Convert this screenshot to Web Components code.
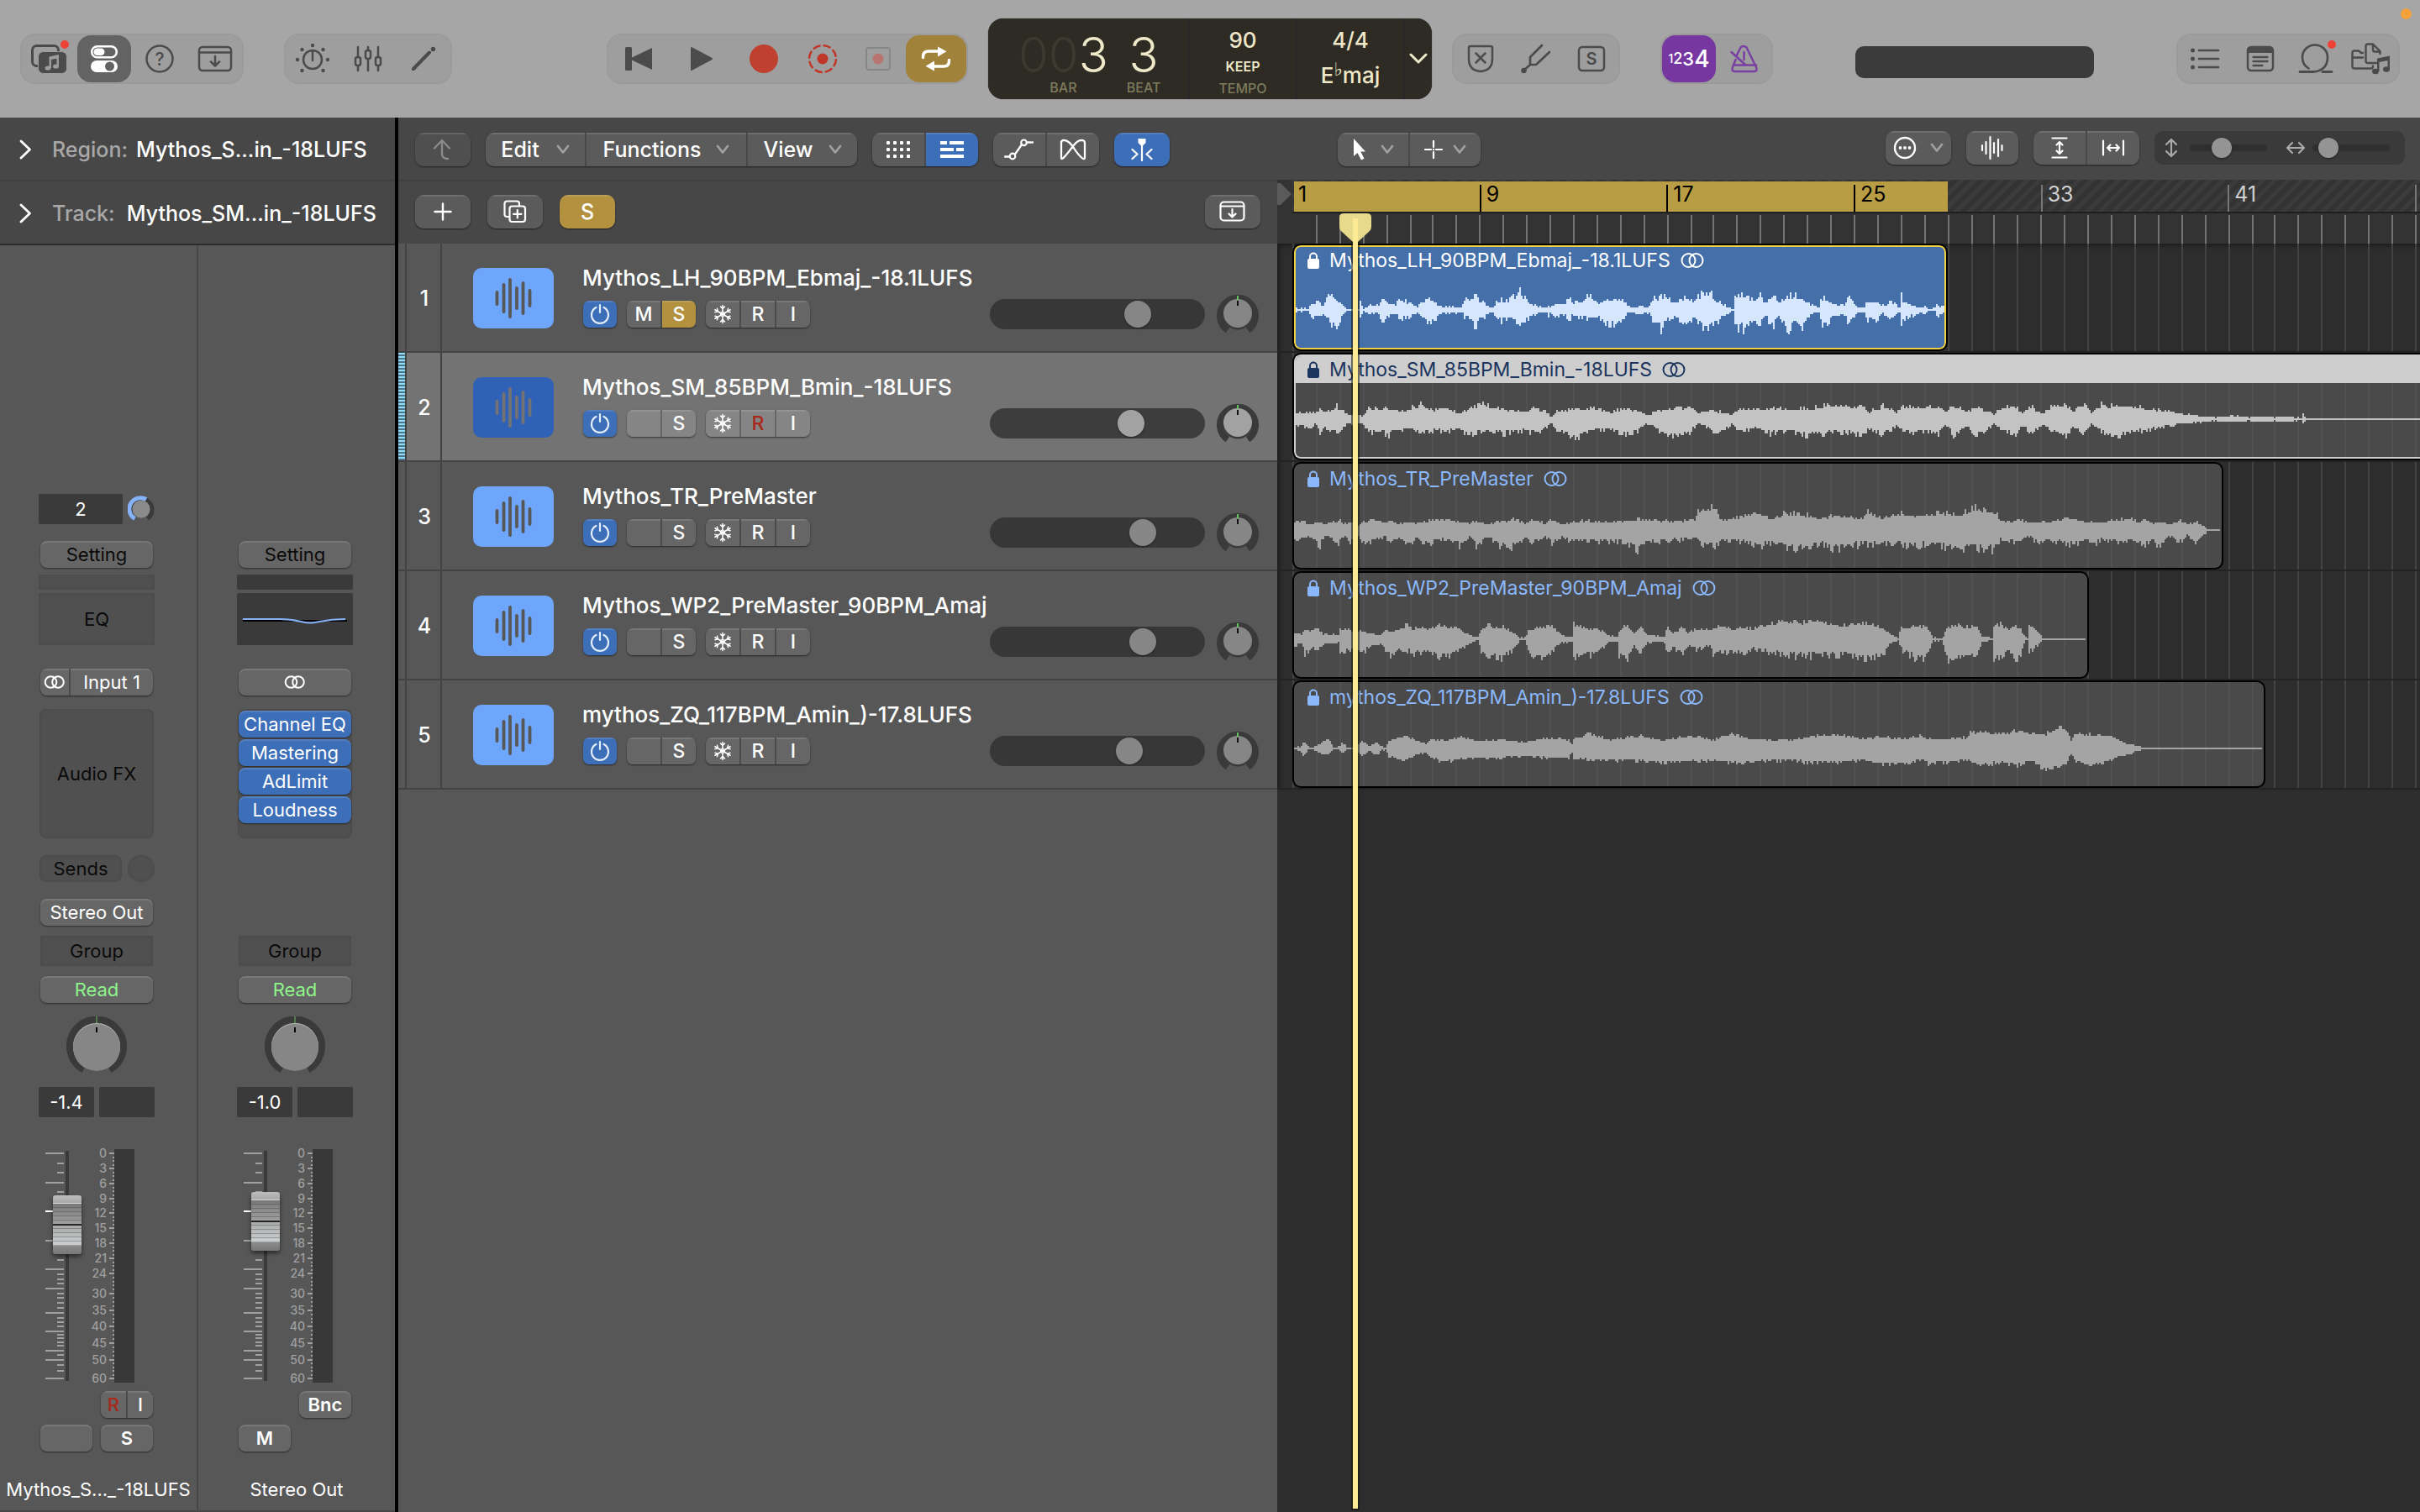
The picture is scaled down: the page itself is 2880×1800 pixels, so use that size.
<!DOCTYPE html>
<html lang="en">
<head>
<meta charset="utf-8">
<title>Mythos – Tracks</title>
<style>
html,body{margin:0;height:100%;background:#2d2d2d}
body{font-family:Inter,"Liberation Sans",sans-serif;color:#fff;overflow:hidden}
</style>
</head>
<body>
<daw-app></daw-app>
<script>
/* ---------- icons: [width, height, markup] ---------- */
const S='fill="none" stroke="currentColor" stroke-linecap="round" stroke-linejoin="round" stroke-width=';
const ICONS={
library:[44,36,`<rect x="2.5" y="2.5" width="31" height="24" rx="5" ${S}"3"/><rect x="9.500" y="9.500" width="34" height="26" rx="6" fill="currentColor" stroke="#9d9d9d" stroke-width="1"/><g fill="#9d9d9d"><ellipse cx="21" cy="29" rx="3.500" ry="2.600"/><ellipse cx="30.500" cy="27" rx="3.500" ry="2.600"/><path d="M22.500 15.500l11.500-2.500v4l-9 2v10h-2.500zM31.500 14h2.500v13h-2.500z"/></g>`],
smart:[34,34,`<rect x="2.2" y="2.2" width="29.600" height="13" rx="6.500" ${S}"2.500"/><rect x="4.500" y="4.500" width="13" height="8.500" rx="4.250" fill="currentColor"/><rect x="1" y="19" width="32" height="14" rx="7" fill="currentColor"/><circle cx="23.500" cy="26" r="5.500" fill="#636363"/>`],
help:[36,36,`<circle cx="18" cy="18" r="15.500" ${S}"2.500"/><text x="18" y="25.500" text-anchor="middle" font-size="21" font-weight="500" fill="currentColor" font-family="Inter,sans-serif">?</text>`],
inbox:[42,32,`<rect x="2" y="2" width="38" height="28" rx="4" ${S}"2.500"/><path d="M2 8.500h38M21 13v11M16 19.500l5 5 5-5" ${S}"2.500"/>`],
inboxSmall:[32,26,`<rect x="1.500" y="1.500" width="28" height="22" rx="4" ${S}"2.200"/><path d="M2 6.500h27M15.500 10v9M11.500 15.500l4 4 4-4" ${S}"2.200"/>`],
dial:[42,38,`<circle cx="21" cy="20" r="11" ${S}"2.500"/><path d="M21 10v11" ${S}"2.500"/><g fill="currentColor"><circle cx="21" cy="3" r="2.200"/><circle cx="8.500" cy="8" r="2.200"/><circle cx="33.500" cy="8" r="2.200"/><circle cx="3" cy="20" r="2.200"/><circle cx="39" cy="20" r="2.200"/><circle cx="8.500" cy="33" r="2.200"/><circle cx="33.500" cy="33" r="2.200"/></g>`],
faders:[34,32,`<path d="M5 2v12M5 24v6M17 2v4M17 16v14M29 2v12M29 24v6" ${S}"2.500"/><g ${S}"2.500"><rect x="2" y="14" width="6" height="10" rx="2.500"/><rect x="14" y="6" width="6" height="10" rx="2.500"/><rect x="26" y="14" width="6" height="10" rx="2.500"/></g>`],
pencil:[32,32,`<path d="M4 28L23 8.500" ${S}"4"/><path d="M2 30l2-5 3 3z" fill="currentColor"/><circle cx="27.500" cy="4.500" r="2.700" fill="currentColor"/>`],
back:[34,30,`<rect x="1" y="1" width="8" height="28" rx="1.500" fill="currentColor"/><path d="M33 2v26L9 16.500v-3z" fill="currentColor"/>`],
play:[28,30,`<path d="M1 1.500Q1 .5 2.500 1.200L26.500 14Q27.500 15 26.500 16L2.500 28.800Q1 29.500 1 28.500z" fill="currentColor"/>`],
record:[34,34,`<circle cx="17" cy="17" r="17" fill="#c0402f"/>`],
capture:[36,36,`<circle cx="18" cy="18" r="16" fill="none" stroke="#c0372a" stroke-width="2.500" stroke-dasharray="9.600 2.960"/><circle cx="18" cy="18" r="6.500" fill="#c0372a"/>`],
replace:[32,30,`<rect x="2" y="2" width="28" height="26" rx="3" fill="none" stroke="#878787" stroke-width="2"/><circle cx="16" cy="15" r="6.500" fill="#b97570"/>`],
cycle:[36,30,`<path d="M2.500 13.500v-1q0-6.500 6.500-6.500H21" ${S}"3.500"/><path d="M20 .5l10.500 5.700L20 12.500z" fill="currentColor"/><g transform="rotate(180 18 15)"><path d="M2.500 13.500v-1q0-6.500 6.500-6.500H21" ${S}"3.500"/><path d="M20 .5l10.500 5.700L20 12.500z" fill="currentColor"/></g>`],
shield:[32,34,`<path d="M4 2h24q2 0 2 2v13q0 14-14 15Q2 31 2 17V4q0-2 2-2zM10.500 10.500l11 11M21.500 10.500l-11 11" ${S}"2.500"/>`],
fork:[38,38,`<path d="M4 33l8-7M26 3L12 17v9h7L35 11" ${S}"2.700"/><circle cx="4.500" cy="33" r="3.300" fill="currentColor"/>`],
solo:[34,32,`<rect x="2" y="2" width="30" height="28" rx="4" ${S}"2.500"/><text x="17" y="23" text-anchor="middle" font-size="20" font-weight="600" fill="currentColor" font-family="Inter,sans-serif">S</text>`],
metronome:[36,34,`<path d="M8.500 13.500l5-10q3.500-3 7 0L32 27q2 5-3 5H7q-5 0-3-5l3.500-9M5 24.500h27M19 24L2.500 9M17.500 9v9" ${S}"2.500"/>`],
list:[36,28,`<path d="M11 4h23M11 14h23M11 24h23" ${S}"2.700"/><g fill="currentColor"><circle cx="3.500" cy="4" r="2.500"/><circle cx="3.500" cy="14" r="2.500"/><circle cx="3.500" cy="24" r="2.500"/></g>`],
notes:[34,32,`<rect x="2" y="2" width="30" height="28" rx="4" ${S}"2.500"/><path d="M2 9V5q0-3 3-3h24q3 0 3 3v4z" fill="currentColor"/><path d="M8.500 14h17M8.500 19h17M8.500 24h11" ${S}"2.300"/>`],
loop:[42,36,`<path d="M2 33.500h16M29 33.500h11" ${S}"2.800"/><path d="M12.500 29.500Q5 25 5 16A15 14.500 0 0 1 35 16Q35 32 18 33.500" ${S}"2.600"/>`],
media:[48,38,`<path d="M14 12h-2l-3-2.500H3.500q-2 0-2 2V28q0 2.500 2.500 2.500H24q2 0 2-3M2 17.500h12M30 24H20q-2.500 0-2.500-2.500V4q0-2.500 2.500-2.500h6l8.500 8.500v3M26 2v6q0 2.500 2.500 2.500H34" ${S}"2.400"/><g fill="currentColor"><ellipse cx="29" cy="34" rx="4" ry="3.200"/><ellipse cx="42" cy="31.500" rx="4" ry="3.200"/><path d="M31 18.500l15-3v5l-12.500 2.500v11h-2.500zM43.500 17H46v15h-2.500z"/></g>`],
chev:[16,12,`<path d="M2 2l6 7.500L14 2" ${S}"2.800"/>`],
chevLcd:[22,14,`<path d="M2 2l9 9 9-9" ${S}"3"/>`],
disclosure:[16,24,`<path d="M2 2l10.500 10L2 22" ${S}"2.800"/>`],
upturn:[24,26,`<path d="M11 3v15q0 6 7 6M2 11.500l9-9.500 9 9.500" ${S}"2.300"/>`],
grid:[28,20,[0,8,16,24].map(x=>[0,8,16].map(y=>`<rect x="${x}" y="${y}" width="4" height="4" rx="1" fill="currentColor"/>`).join('')).join('')],
blocks:[28,20,`<g fill="currentColor"><rect width="8" height="4"/><rect x="11" width="17" height="4"/><rect y="8" width="16" height="4"/><rect x="19" y="8" width="9" height="4"/><rect y="16" width="28" height="4"/></g>`],
auto:[36,26,`<path d="M1 21.500h5M13 18.500l8-11.500M27 4.500h7" ${S}"2.300"/><circle cx="10" cy="21" r="3.300" ${S}"2.200"/><circle cx="23.500" cy="4.800" r="3.300" ${S}"2.200"/>`],
flex:[32,26,`<path d="M2 3.500v19Q2 26 6 21.500Q10 17 16 9Q21 2 26 1.800Q30 2 30 5v17Q30 26 26 22.500Q21 18 15.500 9Q10 1.800 5 1.800Q2 2 2 5" ${S}"2.300"/>`],
catch:[26,28,`<path d="M13 9v18M1.500 14l6 5.500-6 5.500M24.500 14l-6 5.500 6 5.500" ${S}"2.200"/><path d="M8.500 1h9v5L13 10.500 8.500 6z" fill="currentColor"/>`],
pointer:[18,28,`<path d="M2 1v21l4.500-4 4.500 8.500 3.500-1.800-4.200-8.200H16z" fill="currentColor"/>`],
cross:[22,22,`<path d="M11 1v7M11 14v7M1 11h7M14 11h7" ${S}"2.200"/><circle cx="11" cy="11" r="1.200" fill="currentColor"/>`],
more:[28,28,`<circle cx="14" cy="14" r="12" ${S}"2.400"/><g fill="currentColor"><circle cx="8.500" cy="14" r="1.900"/><circle cx="14" cy="14" r="1.900"/><circle cx="19.500" cy="14" r="1.900"/></g>`],
wave:[28,30,`<path d="M2 12v6M6.500 8v14M11.500 2v26M16 9v12M21 5v20M25.500 12v6" ${S}"2.200"/>`],
fitV:[20,26,`<path d="M1.500 1.500h17M1.500 24.500h17M10 6v14M6.500 9.500L10 6l3.500 3.500M6.500 16.500L10 20l3.500-3.500" ${S}"2.200"/>`],
fitH:[28,20,`<path d="M2 1.500v17M26 1.500v17M7 10h14M10.500 6.500L7 10l3.500 3.500M17.500 6.500L21 10l-3.500 3.500" ${S}"2.200"/>`],
arrV:[16,24,`<path d="M8 2.500v19M2 8l6-6 6 6M2 16l6 6 6-6" ${S}"2.200"/>`],
arrH:[24,16,`<path d="M2.500 8h19M8 2L2 8l6 6M16 2l6 6-6 6" ${S}"2.200"/>`],
plus:[22,22,`<path d="M11 1.500v19M1.500 11h19" ${S}"2.400"/>`],
dup:[28,28,`<path d="M7 20H4.500q-3 0-3-3V4.500q0-3 3-3H16q3 0 3 3V7" ${S}"2.200"/><rect x="7.500" y="7.500" width="18.500" height="18.500" rx="3" ${S}"2.200"/><path d="M16.800 12v9.500M12 16.800h9.500" ${S}"2.200"/>`],
power:[24,26,`<path d="M7.500 5A10 10 0 1 0 16.500 5M12 2v9" ${S}"2.200"/>`],
snow:[22,24,`<g ${S}"1.500">${[0,60,120,180,240,300].map(a=>`<path transform="rotate(${a} 11 12)" d="M11 12V1.500M8.500 3l2.500 2.500L13.500 3M11 8.500"/>`).join('')}<path d="M11 9l2.600 1.500v3L11 15l-2.600-1.500v-3z" stroke-width="1"/></g>`],
stereo:[28,20,`<circle cx="9.500" cy="10" r="8" ${S}"2"/><circle cx="18.500" cy="10" r="8" ${S}"2"/>`],
stereoS:[26,16,`<circle cx="8.500" cy="8" r="6.800" ${S}"2"/><circle cx="17" cy="8" r="6.800" ${S}"2"/>`],
lock:[14,22,`<rect y="9" width="14" height="12" rx="2" fill="currentColor"/><path d="M3 10V6.500a4 4 0 0 1 8 0V10" ${S}"2"/>`],
clip:[44,48,`<path d="M2.500 17v14M10.500 8v32M18 2v44M26 12v24M33.500 6v36M41.500 15v18" ${S}"3.800"/>`]
};
const icon=n=>{const[w,h,m]=ICONS[n];return `<svg width="${w}" height="${h}" viewBox="0 0 ${w} ${h}" aria-hidden="true">${m}</svg>`};

const RESET=`*{box-sizing:border-box}svg{display:block;flex:none}button{font:inherit;color:inherit;border:0;margin:0;padding:0;background:none;display:flex;align-items:center;justify-content:center}`;
const define=(name,render)=>customElements.define(name,class extends HTMLElement{
  connectedCallback(){ if(this.shadowRoot)return; this.attachShadow({mode:'open'}).innerHTML=`<style>${RESET}</style>`+render(this); }
});
const at=(el,n,d='')=>el.getAttribute(n)??d;

/* ---------- control bar ---------- */
define('tool-group',()=>`<style>:host{display:flex;gap:2px;padding:2px;height:60px;box-sizing:border-box;border-radius:18px;background:#9e9e9e;box-shadow:inset 0 0 2px #8f8f8f;flex:none}</style><slot></slot>`);
define('tool-button',el=>{
  const w=at(el,'w','64'),tone=at(el,'tone');
  return `<style>:host{display:block;color:#4b4b4b}
  button{position:relative;width:${w}px;height:56px;border-radius:16px}
  button.dark{background:#636363;color:#fff}button.gold{background:#a1823a;color:#fff}button.purple{background:#7637a0;color:#fff}button.violet{color:#7a3fa3}
  i{position:absolute;width:10px;height:10px;border-radius:5px;background:#ee4236;right:8px;top:6px}
  .count{display:flex;align-items:center;font-weight:500;line-height:28px}
  .n1{font-size:14px}.n2{font-size:18px}.n3{font-size:22px}.n4{font-size:28px}</style>
  <button class="${tone}" aria-label="${at(el,'label')}">${at(el,'icon')==='count'?'<span class="count"><span class="n1">1</span><span class="n2">2</span><span class="n3">3</span><span class="n4">4</span></span>':icon(at(el,'icon'))}${el.hasAttribute('dot')?'<i></i>':''}</button>`});

define('lcd-display',()=>`<style>
:host{display:flex;width:528px;height:96px;border-radius:18px;background:#2d2b24;color:#efe8c8;flex:none;overflow:hidden;box-shadow:0 0 1px #222}
.cell{display:flex;flex-direction:column;align-items:center;border-right:2px solid #27272a;padding-top:12px;width:128px}
.pos{flex-direction:row;align-items:flex-start;width:240px;padding:0 0 0 36px;gap:22px}
.num{display:flex;flex-direction:column;align-items:center}
.big{font-size:58px;font-weight:300;line-height:60px;margin-top:13px}
.big i{font-style:normal;color:#3b3930}
.lab{font-size:16px;line-height:18px;color:#7e7a5b;font-weight:500}
.mid{font-size:26px;line-height:28px;font-weight:500}
.keep{font-size:16px;line-height:18px;font-weight:600;margin:8px 0 8px}
.key{margin-top:14px;display:flex;align-items:flex-start}
.flat{font-size:22px;line-height:14px;font-weight:700;font-family:"DejaVu Sans",Inter,sans-serif}
button{width:32px}
</style>
<div class="cell pos"><div class="num"><span class="big"><i>00</i>3</span><span class="lab">BAR</span></div><div class="num"><span class="big">3</span><span class="lab">BEAT</span></div></div>
<div class="cell"><span class="mid">90</span><span class="keep">KEEP</span><span class="lab">TEMPO</span></div>
<div class="cell"><span class="mid">4/4</span><span class="mid key">E<span class="flat">♭</span>maj</span></div>
<button aria-label="Display mode">${icon('chevLcd')}</button>`);

define('control-bar',()=>`<style>
:host{display:flex;align-items:center;height:140px;padding:0 24px;background:#a6a6a6;position:relative;box-sizing:border-box}
.s1{flex:184 0 0}.s2{flex:98 0 0}.g24{width:24px}.g48{width:48px}
.readout{width:284px;height:38px;border-radius:10px;background:#3b3b3b;margin-top:8px}
.mic{position:absolute;right:10px;top:10px;width:13px;height:13px;border-radius:50%;background:#f4a139}
</style>
<tool-group><tool-button icon="library" label="Library" dot></tool-button><tool-button icon="smart" label="Inspector" tone="dark"></tool-button><tool-button icon="help" label="Quick help"></tool-button><tool-button icon="inbox" label="Toolbar"></tool-button></tool-group>
<span class="g48"></span>
<tool-group><tool-button icon="dial" label="Smart controls"></tool-button><tool-button icon="faders" label="Mixer"></tool-button><tool-button icon="pencil" label="Editors"></tool-button></tool-group>
<span class="s1"></span>
<tool-group><tool-button w="72" icon="back" label="Go to beginning"></tool-button><tool-button w="74" icon="play" label="Play"></tool-button><tool-button w="70" icon="record" label="Record"></tool-button><tool-button w="66" icon="capture" label="Capture"></tool-button><tool-button w="62" icon="replace" label="Replace"></tool-button><tool-button w="72" icon="cycle" label="Cycle" tone="gold"></tool-button></tool-group>
<span class="g24"></span><lcd-display></lcd-display><span class="g24"></span>
<tool-group><tool-button icon="shield" label="Low latency"></tool-button><tool-button icon="fork" label="Tuner"></tool-button><tool-button icon="solo" label="Solo"></tool-button></tool-group>
<span class="g48"></span>
<tool-group><tool-button icon="count" label="Count in" tone="purple"></tool-button><tool-button icon="metronome" label="Metronome" tone="violet"></tool-button></tool-group>
<span class="s2"></span><div class="readout"></div><span class="s2"></span>
<tool-group><tool-button icon="list" label="List editors"></tool-button><tool-button icon="notes" label="Note pads"></tool-button><tool-button icon="loop" label="Loops" dot></tool-button><tool-button icon="media" label="Browsers"></tool-button></tool-group>
<span class="mic"></span>`);

/* ---------- segmented buttons ---------- */
define('seg-group',el=>`<style>:host{display:flex;gap:2px;border-radius:${at(el,'r','10')}px;overflow:hidden;background:var(--seam,#484848);box-shadow:0 1px 2px rgba(0,0,0,.55);flex:none}</style><slot></slot>`);
define('seg-button',el=>{
  const w=at(el,'w','62'),h=at(el,'h','40');
  return `<style>:host{display:block}
  button{width:${w}px;height:${h}px;background:var(--key,#5b5b5b);box-shadow:inset 0 2px 1px rgba(255,255,255,.13);font-weight:${at(el,'fw','500')};font-size:${at(el,'fs','25')}px;gap:${at(el,'gap','18')}px}
  .blue{background:#3d6eb8}.gold{background:#b3913f}.off{background:#4f4f4f;color:#8b8b8b}.red{color:#a8281b}.power{color:#e3edfb;background:#3d6eb8}
  .chev{color:#a0a0a0}</style>
  <button class="${at(el,'tone')}" aria-label="${at(el,'label')||el.textContent.trim()||'Mute'}">${at(el,'icon')?icon(at(el,'icon')):''}<slot></slot>${el.hasAttribute('chev')?`<span class="chev">${icon('chev')}</span>`:''}</button>`});

define('zoom-box',()=>`<style>
:host{display:flex;width:298px;height:40px;border-radius:10px;background:#3a3a3a;color:#a9a9a9;overflow:hidden;flex:none}
label{display:flex;align-items:center;gap:14px;padding:0 12px;flex:none}
label:first-child{border-right:2px solid #2b2b2b}
label+label{gap:8px;padding:0 10px}
input{appearance:none;-webkit-appearance:none;margin:0;height:24px;width:92px;background:none}
input::-webkit-slider-runnable-track{height:8px;border-radius:4px;background:#2f2f2f}
input::-webkit-slider-thumb{-webkit-appearance:none;width:24px;height:24px;margin-top:-8px;border-radius:50%;background:#949494;box-shadow:0 1px 2px #222}
</style><label>${icon('arrV')}<input type="range" aria-label="Vertical zoom" max="68" value="26"></label><label>${icon('arrH')}<input type="range" aria-label="Horizontal zoom" max="68" value="7"></label>`);

define('arrange-toolbar',()=>`<style>
:host{display:flex;align-items:center;gap:18px;height:74px;padding:2px 18px 0 20px;background:#474747;box-sizing:border-box}
.a{flex:164 0 0}.b{flex:446 0 0}.right{display:flex;gap:18px;padding-bottom:4px}
</style>
<seg-group><seg-button w="66" icon="upturn" tone="off" label="Up"></seg-button></seg-group>
<seg-group><seg-button w="118" gap="20" chev>Edit</seg-button><seg-button w="190" gap="18" chev>Functions</seg-button><seg-button w="130" gap="18" chev>View</seg-button></seg-group>
<seg-group><seg-button icon="grid" label="Cell view"></seg-button><seg-button icon="blocks" tone="blue" label="Tracks view"></seg-button></seg-group>
<seg-group><seg-button icon="auto" label="Automation"></seg-button><seg-button icon="flex" label="Flex"></seg-button></seg-group>
<seg-group><seg-button w="66" icon="catch" tone="blue" label="Catch playhead"></seg-button></seg-group>
<span class="a"></span>
<seg-group><seg-button w="84" gap="16" icon="pointer" label="Pointer tool" chev></seg-button><seg-button w="84" gap="12" icon="cross" label="Marquee tool" chev></seg-button></seg-group>
<span class="b"></span>
<div class="right"><seg-group><seg-button w="78" icon="more" label="More" gap="16" chev></seg-button></seg-group>
<seg-group><seg-button icon="wave" label="Waveform zoom"></seg-button></seg-group>
<seg-group><seg-button icon="fitV" label="Fit vertically"></seg-button><seg-button icon="fitH" label="Fit horizontally"></seg-button></seg-group>
<zoom-box></zoom-box></div>`);

/* ---------- tracks ---------- */
define('pan-knob',el=>{
  const big=at(el,'size')==='big';
  return big?`<style>:host{display:block}</style><svg width="72" height="72" viewBox="0 0 72 72" role="img" aria-label="Pan"><path d="M20.500 61.500A32 32 0 1 1 51.500 61.500" transform="translate(0 2)" fill="none" stroke="#3a3a3a" stroke-width="8"/><circle cx="36" cy="37" r="28" fill="#484848"/><circle cx="36" cy="36" r="28" fill="#b5b5b5"/><circle cx="36" cy="37" r="28" fill="#868686"/><rect x="35.500" y="0" width="1" height="8" fill="#6cb864"/><rect x="35" y="13" width="2" height="6" fill="#000"/></svg>`
  :`<style>:host{display:block}</style><svg width="50" height="50" viewBox="0 0 50 50" role="img" aria-label="Pan"><path d="M13 46A21 21 0 1 1 37 46" transform="translate(0 -1)" fill="none" stroke="#3a3a3a" stroke-width="8"/><circle cx="25" cy="27" r="17.500" fill="#3a3a3a"/><circle cx="25" cy="25" r="17" fill="${at(el,'fill','#868686')}"/><rect x="24" y="4" width="2" height="5" fill="#63c25c"/><rect x="24" y="10" width="2" height="6" fill="#111"/></svg>`});

define('track-row',el=>{
  const sel=el.hasAttribute('selected'),n=at(el,'n');
  return `<style>
:host{display:flex;height:130px;box-sizing:border-box;border-bottom:2px solid #434343;background:${sel?'#737373':'#575757'};--key:${sel?'#858585':'#666'};--seam:${sel?'#666':'#4b4b4b'}}
.meter{width:10px;border-right:2px solid #434343;${sel?'background:repeating-linear-gradient(#8fdcff 0 2px,#4f7484 2px 4px)':''}}
.num{width:42px;border-right:2px solid #434343;display:flex;align-items:center;justify-content:center;padding:2px 0 0 2px;font-size:25px;font-weight:500}
.art{margin:29px 34px 0 37px;width:96px;height:72px;border-radius:10px;display:flex;align-items:center;justify-content:center;background:${sel?'#2f61b7':'#6ea6fb'};color:${sel?'#737373':'#575757'}}
.main{flex:1;padding-top:25px}
.name{font-size:26px;font-weight:500;line-height:32px;white-space:nowrap}
.keys{display:flex;gap:12px;margin:11px 0 0 1px}
input{appearance:none;-webkit-appearance:none;margin:66px 14px 0 0;width:256px;height:36px;border-radius:18px;background:${sel?'#3d3d3d':'#373737'};padding:0 2px}
input::-webkit-slider-thumb{-webkit-appearance:none;width:32px;height:32px;border-radius:50%;background:${sel?'#a2a2a2':'#868686'};box-shadow:0 1px 2px #222}
pan-knob{margin:58px 22px 0 0}
</style><div class="meter"></div><div class="num">${n}</div><div class="art">${icon('clip')}</div>
<div class="main"><div class="name"><slot></slot></div><div class="keys">
<seg-group r="7"><seg-button w="40" h="32" icon="power" tone="power" label="Track on"></seg-button></seg-group>
<seg-group r="7"><seg-button w="40" h="32" fs="23">${n==='1'?'M':''}</seg-button><seg-button w="40" h="32" fs="23" tone="${n==='1'?'gold':''}">S</seg-button></seg-group>
<seg-group r="7"><seg-button w="40" h="32" icon="snow" label="Freeze"></seg-button><seg-button w="40" h="32" fs="23" tone="${sel?'red':''}">R</seg-button><seg-button w="40" h="32" fs="23">I</seg-button></seg-group></div></div>
<input type="range" max="220" value="${at(el,'vol')}" aria-label="Volume of track ${n}"><pan-knob fill="${sel?'#a2a2a2':'#868686'}"></pan-knob>`});

define('track-list',()=>`<style>
:host{display:flex;flex-direction:column;width:1046px;flex:none;background:#575757}
header{display:flex;gap:20px;align-items:center;height:76px;padding:0 20px 2px;background:#474747;border-top:2px solid #3f3f3f}
header span{flex:1}
</style><header><seg-group><seg-button w="66" icon="plus" label="Add track"></seg-button></seg-group><seg-group><seg-button w="66" icon="dup" label="Duplicate track"></seg-button></seg-group><seg-group><seg-button w="66" tone="gold">S</seg-button></seg-group><span></span><seg-group><seg-button w="66" icon="inboxSmall" label="Header settings"></seg-button></seg-group></header>
<track-row n="1" vol="158">Mythos_LH_90BPM_Ebmaj_-18.1LUFS</track-row>
<track-row n="2" vol="150" selected>Mythos_SM_85BPM_Bmin_-18LUFS</track-row>
<track-row n="3" vol="164">Mythos_TR_PreMaster</track-row>
<track-row n="4" vol="164">Mythos_WP2_PreMaster_90BPM_Amaj</track-row>
<track-row n="5" vol="148">mythos_ZQ_117BPM_Amin_)-17.8LUFS</track-row>`);

/* ---------- timeline ---------- */
/* peak envelopes: x, level above the centre line, level below it */
const ENV={
1:[0,3,3,4,1,1,16,1,1,19,6,12,29,12,12,33,4,4,36,12,10,43,20,18,51,13,22,60,2,2,64,0,0,76,0,0,78,9,13,82,1,1,87,5,4,100,5,4,103,16,24,112,9,8,120,7,6,126,16,12,136,8,9,147,4,4,152,12,11,160,13,20,172,6,6,176,2,2,180,4,5,199,3,2,203,16,12,208,12,10,213,22,26,220,12,14,230,5,6,237,2,2,240,13,15,252,11,16,260,16,12,268,24,26,279,9,12,292,3,2,300,2,2,301,8,14,303,2,2,310,8,8,322,6,6,325,16,24,330,10,9,337,8,9,352,22,14,359,6,9,368,14,16,384,16,24,392,13,14,396,3,4,422,4,4,426,14,15,435,18,28,445,13,14,453,9,9,466,18,28,475,12,12,483,20,24,491,25,28,498,18,24,507,8,12,520,1,1,522,1,1,524,18,27,536,21,27,545,13,15,553,20,21,562,8,9,568,18,26,576,9,9,584,16,28,595,20,20,604,16,28,614,7,6,624,2,2,627,17,26,636,12,15,645,6,6,655,7,7,659,25,25,665,13,12,669,3,3,678,2,2,680,11,13,692,11,15,701,4,4,708,12,18,718,4,4,720,2,2,721,21,25,724,14,16,729,7,10,747,2,3,750,5,8,753,1,1,762,1,1,764,5,8,776,3,3],
2:[0,9,8,8,6,6,18,9,14,25,6,6,30,14,18,36,8,10,50,15,20,62,6,6,80,3,4,88,14,18,100,12,16,112,13,20,130,10,12,152,18,20,165,9,14,180,15,17,195,7,12,210,13,20,222,18,17,250,12,19,275,9,14,285,14,18,300,8,10,305,2,4,312,9,15,328,11,22,340,12,22,355,14,16,375,8,12,390,12,19,408,11,16,420,4,5,430,9,11,440,12,22,460,13,20,470,16,18,480,8,4,490,9,10,503,9,23,520,5,6,530,13,17,548,11,12,563,14,19,590,12,16,615,13,22,645,18,17,665,14,18,676,18,22,684,8,14,700,16,20,716,8,10,724,15,17,745,14,18,765,15,19,776,8,8,784,17,22,800,9,10,812,15,22,832,5,6,840,12,14,856,17,21,866,6,8,876,15,20,890,5,6,902,17,16,917,17,23,926,9,12,942,19,19,948,6,6,960,17,17,970,12,18,972,17,28,990,17,19,1015,13,14,1041,9,9,1060,6,5,1078,3,3,1095,1,1,1112,3,3,1132,3,2,1134,1,1,1158,3,2,1166,1,1,1185,2,4,1190,1,1,1198,1,1,1200,6,5,1204,1,1,1206,0,0,1342,0,0],
3:[0,8,15,11,10,12,16,6,8,30,9,20,36,6,8,52,11,18,60,7,8,66,9,18,74,5,5,84,9,20,96,13,14,107,8,8,112,10,20,124,7,12,134,9,22,145,7,12,158,10,18,176,12,13,196,10,20,208,7,10,216,10,20,228,7,10,244,9,20,260,12,22,275,7,10,282,12,18,300,7,9,305,12,18,318,6,8,328,8,16,332,10,14,350,10,14,365,8,14,385,10,15,396,11,22,410,13,26,420,11,15,450,10,14,476,11,12,480,22,15,487,26,20,500,28,22,505,14,18,511,12,14,525,14,16,541,19,16,551,22,24,566,12,16,583,20,22,605,18,26,625,14,18,645,17,25,676,14,18,681,22,20,700,14,20,716,20,18,735,17,22,752,17,19,767,21,20,790,17,26,810,27,23,830,20,26,837,18,24,839,10,12,855,10,16,864,11,18,872,8,8,887,10,18,900,10,14,918,14,19,930,11,18,944,9,15,949,9,20,960,9,12,980,13,18,995,13,15,1003,9,20,1012,13,18,1020,8,14,1031,9,22,1040,6,8,1054,11,16,1062,6,6,1074,9,17,1080,5,8,1085,2,2,1087,0,0,1102,0,0],
4:[0,8,8,8,5,5,12,12,22,20,9,10,27,12,18,33,6,6,40,5,5,52,4,4,54,12,24,62,13,14,66,10,20,72,6,7,78,11,20,92,6,8,102,5,6,109,12,16,114,9,22,125,12,16,132,16,14,142,12,20,160,13,16,174,16,26,185,13,20,192,16,18,200,9,12,209,4,5,216,2,1,219,1,1,221,12,16,229,16,28,240,13,24,248,15,26,260,8,14,268,1,1,275,1,1,277,10,16,297,14,28,307,16,16,317,4,4,330,2,2,332,18,26,345,13,22,360,12,20,373,4,4,384,2,2,386,10,20,396,18,28,404,6,9,411,14,20,420,4,4,440,3,3,443,15,22,450,6,8,460,13,20,468,8,8,480,12,14,495,9,8,498,12,24,507,17,18,522,10,16,533,14,18,545,12,12,560,16,16,585,21,22,605,20,22,623,23,22,650,16,20,676,19,28,688,17,26,701,13,22,708,7,7,714,2,2,718,1,1,721,13,12,742,15,28,753,13,22,760,1,1,771,1,1,776,13,26,786,18,24,800,14,26,812,16,22,818,2,2,830,1,1,832,14,26,840,17,27,848,12,14,853,14,24,862,14,26,869,2,2,872,0,0,873,0,0,874,18,17,882,11,10,889,2,2,890,0,0,942,0,0],
5:[0,1,1,7,1,1,10,7,9,16,1,1,24,1,1,34,8,7,41,11,6,45,0,0,51,0,0,57,6,5,62,1,0,74,0,0,79,8,8,89,2,2,98,6,8,104,1,1,109,1,1,112,8,9,130,14,16,146,8,6,156,4,5,161,9,11,181,9,16,196,13,12,221,8,11,248,10,11,275,6,8,301,12,11,327,9,12,329,1,1,332,10,13,350,17,13,377,9,14,408,14,14,435,9,18,475,14,15,498,9,14,520,17,18,542,10,16,587,9,14,610,12,16,645,16,17,676,10,14,695,13,20,725,10,18,745,14,14,755,10,18,801,12,14,803,18,16,820,18,20,840,16,16,859,19,21,875,17,14,894,16,27,905,22,22,912,26,21,918,22,20,924,9,6,929,18,14,946,15,22,970,14,14,990,5,7,1007,1,1,1009,0,0,1152,0,0]
};
/* how strongly single peaks fall short of the envelope, above and below */
const ROUGH={1:[.5,.55],2:[.36,.42],3:[.3,.46],4:[.3,.44],5:[.22,.26]};
function wavePath(id,mid){
  const e=ENV[id],[ru,rd]=ROUGH[id];let seed=id*7919,k=0,top='',bot='';
  const rnd=()=>(seed=(seed*1103515245+12345)&0x7fffffff)/0x7fffffff;
  const end=e[e.length-3],snap=v=>2*Math.round(v/2);
  for(let x=0;x<end;x+=2){
    while(k+3<e.length-3&&e[k+3]<=x)k+=3;
    const t=Math.min(1,(x-e[k])/Math.max(1,e[k+3]-e[k]));
    const u=e[k+1]+(e[k+4]-e[k+1])*t,d=e[k+2]+(e[k+5]-e[k+2])*t;
    const a=rnd(),b=rnd();
    const hu=1+snap(u*(1.14-ru+ru*a*a)),hd=1+snap(d*(1.1-rd+rd*b*b));
    top+=`V${mid-hu}h2`;bot=`V${mid+hd}h-2`+bot;
  }
  return `M0 ${mid}${top}V${mid}${bot}z`;
}
define('audio-region',el=>{
  const id=+at(el,'wave'),kind=at(el,'kind'),w=at(el,'w');
  const look={cycle:['#446fa9','#fff','#d6e6fc','2px solid #f0cf45'],sel:['rgba(88,88,88,.68)','#1c355e','#c3c3c3','2px solid #cecece'],'':['rgba(88,88,88,.68)','#8bb8fb','#a4a4a4','0 solid']}[kind];
  return `<style>
:host{display:block;box-sizing:border-box;height:128px;border:2px solid #000;border-radius:10px;background:${kind==='cycle'?'#000':'none'};overflow:hidden;${w?`width:${w}px;flex:none`:'flex:1;border-right:0;border-radius:10px 0 0 10px'}}
.body{height:100%;border:${look[3]};${w?'':'border-right:0;'}border-radius:8px;${w?'':'border-radius:8px 0 0 8px;'}background:${look[0]};overflow:hidden;display:flex;flex-direction:column}
.head{display:flex;align-items:center;height:${kind?34:36}px;padding:0 0 0 ${kind?14:16}px;font-size:23px;line-height:30px;color:${look[1]};white-space:nowrap;${kind==='sel'?'background:#cecece':''}}
.head span{margin:0 12px 0 12px}
svg.w{margin-left:${kind?-2:0}px}
</style><div class="body"><div class="head">${icon('lock')}<span><slot></slot></span>${icon('stereo')}</div>
<svg class="w" width="1342" height="88" viewBox="0 0 1342 88" shape-rendering="crispEdges" aria-hidden="true"><path d="${wavePath(id,43)}" fill="${look[2]}"/></svg></div>`});

define('bar-lines',el=>{
  const h=+at(el,'h'),c=at(el,'c');let s='';
  for(let k=+at(el,'from','0');k<49;k++)s+=`<rect x="${2*Math.round(27.833*k/2)}" width="2" height="${h}"/>`;
  return `<style>:host{display:block;overflow:hidden;min-width:0}</style><svg width="1342" height="${h}" fill="${c}" shape-rendering="crispEdges" aria-hidden="true">${s}</svg>`});

define('time-ruler',()=>`<style>
:host{display:block;height:76px;background:#333;box-sizing:border-box;padding-left:18px;overflow:hidden}
.band{height:38px;display:grid;padding-top:2px;background:repeating-linear-gradient(135deg,#3b3b3b 0 5px,#333 5px 11px)}
.cycle{grid-area:1/1;width:778px;margin-left:2px;background:#b99d45}
.marks{grid-area:1/1;display:grid;grid-template-columns:repeat(6,1fr) 6px}
.marks div{border-left:2px solid #777;margin-top:4px;padding-left:6px;font-size:25px;line-height:22px;color:#d0d0d0}
.marks .on{color:#000;border-color:#000}.marks .first{border-color:transparent;padding-left:5px}
.ticks{border-top:2px solid #1f1f1f;padding-top:2px;height:38px}
</style><div class="band"><div class="cycle"></div><div class="marks"><div class="on first">1</div><div class="on">9</div><div class="on">17</div><div class="on">25</div><div>33</div><div>41</div><div></div></div></div>
<div class="ticks"><bar-lines h="34" c="#737373" from="1"></bar-lines></div>`);

define('play-head',()=>`<style>:host{position:absolute;left:74px;top:40px;bottom:4px;width:38px;pointer-events:none;display:flex;flex-direction:column;align-items:center}
i{flex:1;width:6px;margin-top:-4px;background:#fceb94;box-shadow:0 0 0 2px rgba(20,20,10,.55)}svg{position:relative;z-index:1}</style>
<svg width="38" height="36" viewBox="0 0 38 36" aria-hidden="true"><path d="M5 0h28q5 0 5 5v11q0 3-2 5L22 34h-6L2 21q-2-2-2-5V5q0-5 5-5z" fill="#e8da8c"/><rect x="16" y="6" width="6" height="30" fill="#fceb94"/></svg><i></i>`);

define('time-line',()=>`<style>
:host{display:block;flex:1;min-width:0;position:relative;background:#2d2d2d;overflow:hidden}
.area{display:grid;padding-left:18px;grid-template-columns:minmax(0,1fr);box-shadow:inset 5px 5px 5px -2px rgba(0,0,0,.35)}
bar-lines,.lanes{grid-area:1/1}
.lanes{margin-left:-18px}
.lane{display:flex;height:130px;box-sizing:border-box;border-bottom:2px solid #232323;padding-left:18px}
.flag{position:absolute;left:0;top:4px}
</style><time-ruler></time-ruler>
<svg class="flag" width="18" height="26" aria-hidden="true"><path d="M0 0h4l13 13L4 26H0z" fill="#5a5a5a"/></svg>
<div class="area"><bar-lines h="650" c="#434343"></bar-lines><div class="lanes">
<div class="lane"><audio-region wave="1" kind="cycle" w="780">Mythos_LH_90BPM_Ebmaj_-18.1LUFS</audio-region></div>
<div class="lane"><audio-region wave="2" kind="sel">Mythos_SM_85BPM_Bmin_-18LUFS</audio-region></div>
<div class="lane"><audio-region wave="3" w="1108">Mythos_TR_PreMaster</audio-region></div>
<div class="lane"><audio-region wave="4" w="948">Mythos_WP2_PreMaster_90BPM_Amaj</audio-region></div>
<div class="lane"><audio-region wave="5" w="1158">mythos_ZQ_117BPM_Amin_)-17.8LUFS</audio-region></div>
</div></div><play-head></play-head>`);

/* ---------- inspector ---------- */
define('level-fader',el=>{
  const major=[5,40,109,143,166,195,217,240,251,273],minor=[17,28,51,132,149,155,160,172,177,183,189,201,206,211,221,225,230,234,245,257,264];
  const db=[[0,5],[3,23],[6,41],[9,59],[12,76],[15,94],[18,112],[21,130],[24,148],[30,172],[35,192],[40,211],[45,231],[50,251],[60,273]];
  let s=major.map(y=>`<rect x="8" y="${y-1}" width="22" height="2"/>`).join('')+minor.map(y=>`<rect x="22" y="${y-1}" width="8" height="2"/>`).join('');
  db.forEach(([v,y],i)=>{s+=`<rect x="84" y="${y-1}" width="6" height="2"/><text x="81" y="${y+5}" text-anchor="end">${v}</text>`;
    const nx=db[i+1];if(nx){const n=Math.round((nx[1]-y)/4.5);for(let j=1;j<n;j++)s+=`<rect x="88" y="${Math.round(y+(nx[1]-y)*j/n)-1}" width="2" height="2"/>`}});
  return `<style>:host{display:grid;width:138px;height:278px;grid-template-columns:138px}
  svg,input{grid-area:1/1}svg{overflow:visible}
  text{font:500 14px Inter,sans-serif}
  input{appearance:none;-webkit-appearance:none;writing-mode:vertical-lr;direction:rtl;margin:2px 0 2px 17px;width:34px;height:274px;background:linear-gradient(90deg,transparent 15px,#3a3a3a 15px 19px,transparent 19px)}
  input::-webkit-slider-thumb{-webkit-appearance:none;width:34px;height:70px;border-radius:3px;box-shadow:0 3px 5px rgba(0,0,0,.5);background:linear-gradient(#bcbcbc,#a8a8a8 9px,#d8d8d8 9px 10px,transparent 10px 60px,#8b8b8b 60px,#777),repeating-linear-gradient(transparent 0 4px,rgba(60,60,60,.35) 4px 5px),linear-gradient(#777 10px,#a0a0a0 34px,#222 34px 36px,#a9a9a9 36px,#cdd0d2 60px)}
  </style><svg width="138" height="278" fill="#a0a0a0"><rect x="90" width="24" height="278" fill="#383838"/>${s}<rect x="8" y="73" width="22" height="2" fill="#fff"/></svg>
  <input type="range" aria-label="Level" max="100" value="${at(el,'value')}">`});

define('channel-strip',el=>{
  const m=el.hasAttribute('master');
  const btn=(t,c='')=>`<button class="b ${c}">${t}</button>`;
  return `<style>
:host{display:flex;flex-direction:column;justify-content:flex-end;width:236px;box-sizing:border-box;border-right:2px solid #474747;border-bottom:2px solid #474747;font-size:22px;line-height:24px;flex:none;padding-bottom:10px;background:#575757}
:host([master]){width:234px;border-right:0}
.col{width:138px;margin-left:46px;display:flex;flex-direction:column;align-items:center}
.row{display:flex;width:138px}
.b{height:32px;width:134px;border-radius:8px;background:#666;box-shadow:inset 0 2px 1px rgba(255,255,255,.13),0 1px 2px rgba(0,0,0,.5);color:#fff;white-space:nowrap}
.k{color:#0a0a0a}.g{color:#8ff58b}.blue{background:#3d6eb8}
.half{width:62px;font-size:22px;font-weight:600}
.dark{background:#3a3a3a;border-radius:2px;display:flex;align-items:center;justify-content:center}
.slot{background:#505050;color:#0a0a0a;display:flex;align-items:center;justify-content:center;border-radius:2px;box-shadow:inset 0 0 4px rgba(0,0,0,.12)}
.h36{height:36px}.h32{height:32px}
.m8{margin-top:8px}.m10{margin-top:10px}.m12{margin-top:12px}.m16{margin-top:16px}.m20{margin-top:20px}.m28{margin-top:28px}.m38{margin-top:38px}
.fx{width:136px;height:154px;border-radius:8px;padding:2px 1px;display:flex;flex-direction:column;gap:2px;background:#505050;box-shadow:inset 0 0 4px rgba(0,0,0,.12)}
.fx.e{align-items:center;justify-content:center;color:#0a0a0a}
seg-group{--key:#666;--seam:#4b4b4b}
.name{margin-top:30px;height:30px;line-height:30px;text-align:center;white-space:nowrap}
</style><div class="col">
${m?'<div class="h36"></div>':`<div class="row h36" style="gap:6px"><div class="dark" style="width:100px">2</div><svg width="32" height="36" viewBox="0 0 32 36" role="img" aria-label="Send level"><path d="M8.500 29.500A13 13 0 1 1 23.500 29.500" fill="none" stroke="#3a3a3a" stroke-width="5"/><path d="M8.500 29.500A13 13 0 0 1 22 6.500" fill="none" stroke="#86b3f8" stroke-width="5"/><circle cx="16" cy="18" r="10.500" fill="#8a8a8a"/></svg></div>`}
<div class="m20"></div>${btn('Setting','k')}
<div class="row m8 ${m?'dark':'slot'}" style="height:18px"></div>
<div class="row ${m?'dark':'slot'}" style="height:62px;margin-top:4px">${m?'<svg width="124" height="20" viewBox="0 0 124 20" aria-hidden="true"><path d="M0 12h124" stroke="#000" stroke-width="2"/><path d="M0 10H44C66 10 68 14.500 79 14.500S96 10 122 10" fill="none" stroke="#86b3f8" stroke-width="2"/></svg>':'EQ'}</div>
<div class="m28"></div>
${m?btn(icon('stereoS')):`<seg-group r="8"><seg-button w="34" h="32" icon="stereoS" label="Stereo"></seg-button><seg-button w="98" h="32" fs="22" fw="400">Input 1</seg-button></seg-group>`}
${m?`<div class="fx m16">${['Channel EQ','Mastering','AdLimit','Loudness'].map(t=>btn(t,'blue')).join('')}</div>`:'<div class="fx e m16">Audio FX</div>'}
<div class="row h32 m20" style="gap:7px">${m?'':'<div class="slot" style="width:98px;margin-left:1px;border-radius:8px">Sends</div><div class="slot" style="width:32px;border-radius:50%"></div>'}</div>
<div class="h32 m20">${m?'':btn('Stereo Out')}</div>
<div class="slot h36 m12" style="width:134px">Group</div>
<div class="m12"></div>${btn('Read','g')}
<pan-knob size="big" class="m16"></pan-knob>
<div class="row h36 m12" style="gap:6px"><div class="dark" style="width:66px">${m?'-1.0':'-1.4'}</div><div class="dark" style="width:66px"></div></div>
<level-fader class="m38" value="${m?76:74}"></level-fader>
<div class="row h32 m10" style="padding-right:2px;justify-content:flex-end">${m?btn('Bnc','half'):'<seg-group r="8"><seg-button w="30" h="32" fs="22" tone="red">R</seg-button><seg-button w="30" h="32" fs="22">I</seg-button></seg-group>'}</div>
<div class="row h32 m8" style="padding:0 2px;gap:10px">${btn(m?'M':'','half')}${m?'':btn('S','half')}</div>
</div><div class="name"><slot></slot></div>`});

define('inspector-panel',()=>`<style>
:host{display:flex;flex-direction:column;width:474px;box-sizing:border-box;border-right:4px solid #000;flex:none;background:#474747}
.line{height:76px;display:flex;align-items:center;gap:10px;padding:2px 0 0 23px;font-size:25px;font-weight:500;border-bottom:2px solid #3f3f3f;white-space:nowrap}
.line+.line{border-bottom:2px solid #2c2c2c;gap:14px}
.line span{color:#a8a8a8}.line button{width:16px;margin-right:13px}
.line+.line button{margin-right:9px}
.strips{flex:1;display:flex}
</style><div class="line"><button aria-label="Show region">${icon('disclosure')}</button><span>Region:</span>Mythos_S...in_-18LUFS</div>
<div class="line"><button aria-label="Show track">${icon('disclosure')}</button><span>Track:</span>Mythos_SM...in_-18LUFS</div>
<div class="strips"><channel-strip>Mythos_S..._-18LUFS</channel-strip><channel-strip master>Stereo Out</channel-strip></div>`);

define('daw-app',()=>`<style>
:host{display:flex;flex-direction:column;min-height:100vh}
.work{flex:1;display:flex}.arrange{flex:1;min-width:0;display:flex;flex-direction:column}.split{flex:1;display:flex}
</style><control-bar></control-bar><div class="work"><inspector-panel></inspector-panel><div class="arrange"><arrange-toolbar></arrange-toolbar><div class="split"><track-list></track-list><time-line></time-line></div></div></div>`);
</script>
</body>
</html>
